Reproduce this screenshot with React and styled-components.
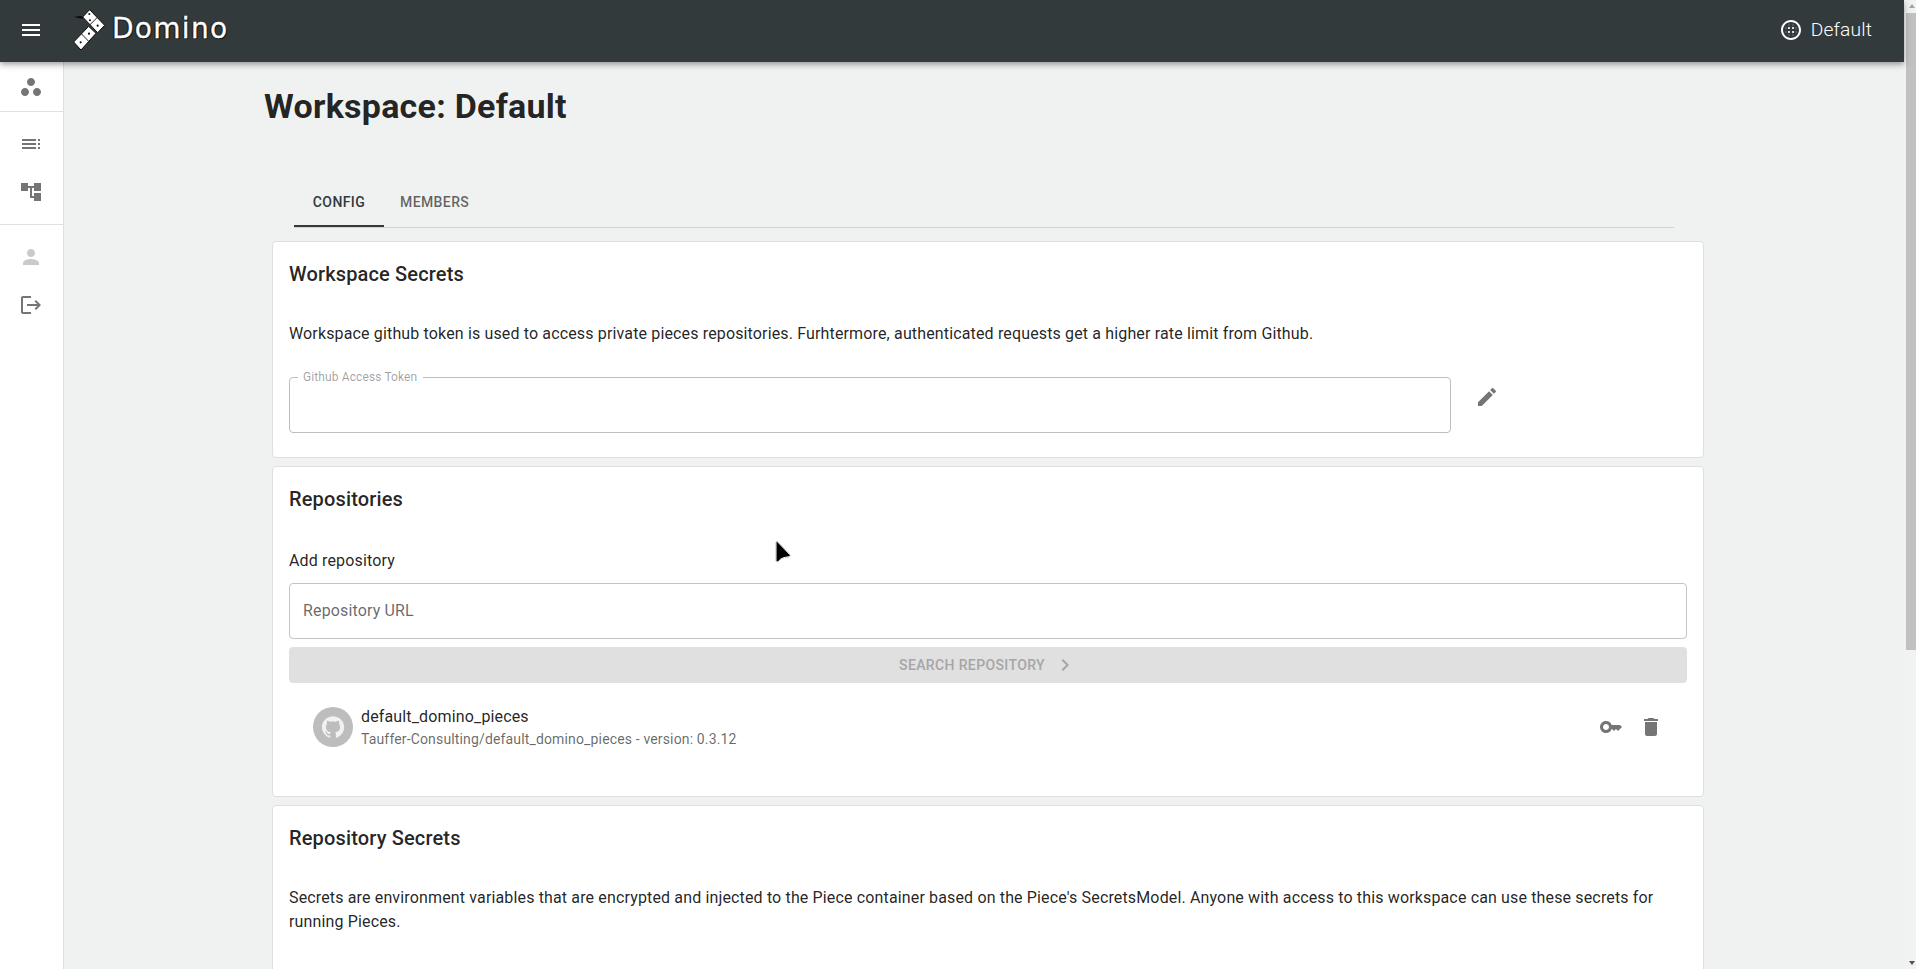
import React from "react";
import styled, { createGlobalStyle } from "styled-components";
import {
  MdMenu,
  MdBlurCircular,
  MdToc,
  MdAccountTree,
  MdPerson,
  MdEdit,
  MdDelete,
  MdChevronRight,
  MdKey,
} from "react-icons/md";

const GlobalStyle = createGlobalStyle`
  *, *::before, *::after { box-sizing: border-box; }
  body {
    margin: 0;
    overflow: hidden;
    background: #f0f2f1;
    color: rgba(0, 0, 0, 0.87);
    font-family: Roboto, "Liberation Sans", sans-serif;
    font-size: 16px;
    line-height: 24px;
    letter-spacing: 0.146px;
  }
`;

const Screen = styled.div`
  display: flex;
  height: 100vh;
  overflow: hidden;
`;

const Shell = styled.div`
  flex: 1;
  min-width: 0;
  display: flex;
  flex-direction: column;
`;

const TopBar = styled.header`
  position: relative;
  z-index: 2;
  flex: none;
  display: flex;
  align-items: center;
  height: 62px;
  padding: 0 32px 2px 19px;
  background: #323a3b;
  color: #fff;
  box-shadow: 0 2px 4px -1px rgba(0, 0, 0, 0.2), 0 4px 5px 0 rgba(0, 0, 0, 0.14),
    0 1px 10px 0 rgba(0, 0, 0, 0.12);
`;

const Brand = styled.div`
  display: flex;
  align-items: center;
  gap: 5px;
  margin-left: 29px;
`;

const BrandMark = styled.svg`
  margin-bottom: 2px;
`;

const BrandName = styled.span`
  font-family: "DejaVu Sans", sans-serif;
  font-size: 28px;
  line-height: 32px;
  letter-spacing: 1.3px;
  margin-top: -2px;
  -webkit-text-stroke: 0.3px #fff;
  text-shadow: 1px 1px 1px #111, -1px 0 1px #111;
`;

const CurrentWorkspace = styled.div`
  display: flex;
  align-items: center;
  gap: 8px;
  margin-left: auto;
  font-size: 19.2px;
  font-weight: 300;
`;

const Body = styled.div`
  flex: 1;
  min-height: 0;
  display: flex;
`;

const Sidebar = styled.nav`
  flex: none;
  width: 64px;
  background: #fff;
  border-right: 1px solid #dedfdf;
  color: #757575;
`;

const SideGroup = styled.div`
  padding: ${(p) => (p.$first ? "1px 0 0" : "8px 0")};
  border-bottom: ${(p) => (p.$last ? "none" : "1px solid #e0e0e0")};
`;

const SideItem = styled.div`
  display: flex;
  align-items: center;
  height: 48px;
  padding-left: 19px;
  opacity: ${(p) => (p.$disabled ? 0.38 : 1)};
`;

const Main = styled.main`
  flex: 1;
  min-width: 0;
  padding: 24px 200px 0 200px;
  overflow: hidden;
`;

const PageTitle = styled.h1`
  margin: 0;
  font-size: 34px;
  line-height: 40px;
  font-weight: 700;
  letter-spacing: 0.25px;
`;

const Tabs = styled.div`
  display: flex;
  height: 49px;
  margin: 53px 30px 13px 30px;
  border-bottom: 1px solid #d1d3d3;
`;

const Tab = styled.div`
  min-width: 90px;
  height: 48px;
  padding: 0 16px 3px;
  display: flex;
  align-items: center;
  justify-content: center;
  font-size: 14px;
  font-weight: 500;
  letter-spacing: 0.4px;
  text-transform: uppercase;
  color: ${(p) => (p.$active ? "#323a3b" : "rgba(0, 0, 0, 0.6)")};
  box-shadow: ${(p) => (p.$active ? "inset 0 -2px 0 #323a3b" : "none")};
`;

const Cards = styled.div`
  display: flex;
  flex-direction: column;
  gap: 8px;
  margin-left: 8px;
`;

const Card = styled.section`
  flex: none;
  height: ${(p) => p.$height}px;
  padding: 16px;
  background: #fff;
  border: 1px solid #dedfdf;
  border-radius: 4px;
`;

const CardTitle = styled.h2`
  margin: 0 0 ${(p) => p.$gap || 32}px;
  font-size: 20px;
  line-height: 32px;
  font-weight: 500;
  letter-spacing: 0.15px;
`;

const Text = styled.p`
  margin: 0;
`;

const TokenRow = styled.div`
  display: flex;
  align-items: center;
  gap: 24px;
  margin-top: 24px;
`;

const TokenField = styled.fieldset`
  width: 1162px;
  height: 63px;
  margin: 0;
  padding: 0 0 0 8px;
  border: 1px solid #bdbdbd;
  border-radius: 4px;
`;

const FieldLabel = styled.legend`
  padding: 0 6px 0 5px;
  font-size: 12px;
  line-height: 14px;
  letter-spacing: 0.11px;
  color: rgba(0, 0, 0, 0.38);
`;

const IconButton = styled.div`
  display: flex;
  margin-bottom: ${(p) => p.$lift || 0}px;
  color: #757575;
`;

const UrlField = styled.div`
  display: flex;
  align-items: center;
  height: 56px;
  margin-top: 10px;
  padding: 0 13px;
  border: 1px solid #c4c4c4;
  border-radius: 4px;
  color: rgba(0, 0, 0, 0.6);
`;

const SearchButton = styled.div`
  display: flex;
  align-items: center;
  justify-content: center;
  gap: 8px;
  height: 36px;
  margin-top: 8px;
  border-radius: 4px;
  background: #e0e0e0;
  color: #a6a6a6;
  font-size: 14px;
  font-weight: 500;
  letter-spacing: 0.37px;
  text-transform: uppercase;
`;

const RepoRow = styled.div`
  display: flex;
  align-items: center;
  height: 56px;
  margin-top: 16px;
  padding: 0 24px;
`;

const Avatar = styled.div`
  display: flex;
  align-items: center;
  justify-content: center;
  width: 40px;
  height: 40px;
  margin-right: 8px;
  border-radius: 50%;
  background: #bdbdbd;
  color: #f0f2f1;
`;

const RepoText = styled.div`
  flex: 1;
`;

const RepoSource = styled.div`
  font-size: 14px;
  line-height: 20px;
  letter-spacing: 0.15px;
  color: rgba(0, 0, 0, 0.6);
`;

const RepoActions = styled.div`
  display: flex;
  gap: 16px;
`;

const Scrollbar = styled.div`
  flex: none;
  display: flex;
  flex-direction: column;
  align-items: flex-end;
  justify-content: space-between;
  width: 12px;
  padding: 4px 0;
  background: #f1f2f2;
`;

const ScrollThumb = styled.div`
  width: 10px;
  height: 637px;
  margin: 5px 0 auto;
  background: #c1c1c1;
`;

const ScrollArrow = styled.div`
  width: 0;
  height: 0;
  margin-right: 1px;
  border: 0 solid transparent;
  border-left-width: 3.5px;
  border-right-width: 3.5px;
  ${(p) =>
    p.$down ? "border-top: 4px solid #505050;" : "border-bottom: 4px solid #a3a3a3;"}
`;

const Pointer = styled.svg`
  position: absolute;
  left: 774px;
  top: 540px;
  z-index: 5;
  filter: drop-shadow(0 0.5px 0.5px rgba(0, 0, 0, 0.5));
`;

const PathIcon = ({ d }) => (
  <svg width="24" height="24" viewBox="0 0 24 24" fill="currentColor">
    <path d={d} />
  </svg>
);

const WORKSPACES =
  "M6 13c-2.2 0-4 1.8-4 4s1.8 4 4 4 4-1.8 4-4-1.8-4-4-4zm6-10C9.8 3 8 4.8 8 7s1.8 4 4 4 4-1.8 4-4-1.8-4-4-4zm6 10c-2.2 0-4 1.8-4 4s1.8 4 4 4 4-1.8 4-4-1.8-4-4-4z";
const LOGOUT =
  "m17 7-1.41 1.41L18.17 11H8v2h10.17l-2.58 2.58L17 17l5-5zM4 5h8V3H4c-1.1 0-2 .9-2 2v14c0 1.1.9 2 2 2h8v-2H4V5z";
const GITHUB =
  "M12 1.27a11 11 0 00-3.48 21.46c.55.09.73-.28.73-.55v-1.84c-3.03.64-3.67-1.46-3.67-1.46-.55-1.29-1.28-1.65-1.28-1.65-.92-.65.1-.65.1-.65 1.1 0 1.73 1.1 1.73 1.1.92 1.65 2.57 1.2 3.21.92a2 2 0 01.64-1.47c-2.47-.27-5.04-1.19-5.04-5.5 0-1.1.46-2.1 1.2-2.84a3.76 3.76 0 010-2.93s.91-.28 3.11 1.1c1.8-.49 3.7-.49 5.5 0 2.1-1.38 3.02-1.1 3.02-1.1a3.76 3.76 0 01.1 2.93c.83.74 1.2 1.74 1.2 2.94 0 4.21-2.57 5.13-5.04 5.4.45.37.82.92.82 2.02v3.03c0 .27.1.64.73.55A11 11 0 0012 1.27";

const DominoMark = () => (
  <BrandMark width="35" height="45" viewBox="220 20 105 135">
    <path d="M227 49l18-2 12 3-4 5-18-3z" fill="#0b0b0b" />
    <g fill="#fff" stroke="#0b0b0b" strokeWidth="3" strokeLinejoin="round">
      <path d="M273 28l45 47-21 22-45-47z" />
      <path d="M270 78l22 21-45 50-22-24z" />
    </g>
    <path d="M273 74l23-23M249 101l20 21" stroke="#222" strokeWidth="3" />
    <g fill="#0b0b0b">
      <circle cx="272" cy="41" r="3" />
      <circle cx="274" cy="60" r="3" />
      <circle cx="297" cy="76" r="3.2" />
      <circle cx="271" cy="100" r="3.2" />
      <circle cx="246" cy="126" r="3.2" />
    </g>
  </BrandMark>
);

export default function App() {
  return (
    <Screen>
      <GlobalStyle />
      <Shell>
        <TopBar>
          <MdMenu size={24} />
          <Brand>
            <DominoMark />
            <BrandName>Domino</BrandName>
          </Brand>
          <CurrentWorkspace>
            <MdBlurCircular size={24} />
            Default
          </CurrentWorkspace>
        </TopBar>
        <Body>
          <Sidebar>
            <SideGroup $first>
              <SideItem>
                <PathIcon d={WORKSPACES} />
              </SideItem>
            </SideGroup>
            <SideGroup>
              <SideItem>
                <MdToc size={24} />
              </SideItem>
              <SideItem>
                <MdAccountTree size={24} />
              </SideItem>
            </SideGroup>
            <SideGroup $last>
              <SideItem $disabled>
                <MdPerson size={24} />
              </SideItem>
              <SideItem>
                <PathIcon d={LOGOUT} />
              </SideItem>
            </SideGroup>
          </Sidebar>
          <Main>
            <PageTitle>Workspace: Default</PageTitle>
            <Tabs>
              <Tab $active>Config</Tab>
              <Tab>Members</Tab>
            </Tabs>
            <Cards>
              <Card $height={217}>
                <CardTitle>Workspace Secrets</CardTitle>
                <Text>
                  Workspace github token is used to access private pieces repositories.
                  Furhtermore, authenticated requests get a higher rate limit from Github.
                </Text>
                <TokenRow>
                  <TokenField>
                    <FieldLabel>Github Access Token</FieldLabel>
                  </TokenField>
                  <IconButton $lift={10}>
                    <MdEdit size={24} />
                  </IconButton>
                </TokenRow>
              </Card>
              <Card $height={331}>
                <CardTitle $gap={34}>Repositories</CardTitle>
                <Text>Add repository</Text>
                <UrlField>Repository URL</UrlField>
                <SearchButton>
                  Search repository
                  <MdChevronRight size={24} />
                </SearchButton>
                <RepoRow>
                  <Avatar>
                    <PathIcon d={GITHUB} />
                  </Avatar>
                  <RepoText>
                    <div>default_domino_pieces</div>
                    <RepoSource>
                      Tauffer-Consulting/default_domino_pieces - version: 0.3.12
                    </RepoSource>
                  </RepoText>
                  <RepoActions>
                    <IconButton>
                      <MdKey size={24} />
                    </IconButton>
                    <IconButton>
                      <MdDelete size={24} />
                    </IconButton>
                  </RepoActions>
                </RepoRow>
              </Card>
              <Card $height={331}>
                <CardTitle>Repository Secrets</CardTitle>
                <Text>
                  Secrets are environment variables that are encrypted and injected to the
                  Piece container based on the Piece's SecretsModel. Anyone with access to
                  this workspace can use these secrets for running Pieces.
                </Text>
              </Card>
            </Cards>
          </Main>
        </Body>
      </Shell>
      <Scrollbar>
        <ScrollArrow />
        <ScrollThumb />
        <ScrollArrow $down />
      </Scrollbar>
      <Pointer width="20" height="24" viewBox="0 0 20 24">
        <path
          d="M2 2.5v18c.6 1.6 2 1.6 3 .3 2-2.6 5-3.6 10-4 1.3-.4 1.6-1.5.6-2.4L3.5 1.8C2.7 1.3 2 1.6 2 2.5z"
          fill="#000"
          stroke="#fff"
          strokeWidth="1"
        />
      </Pointer>
    </Screen>
  );
}
